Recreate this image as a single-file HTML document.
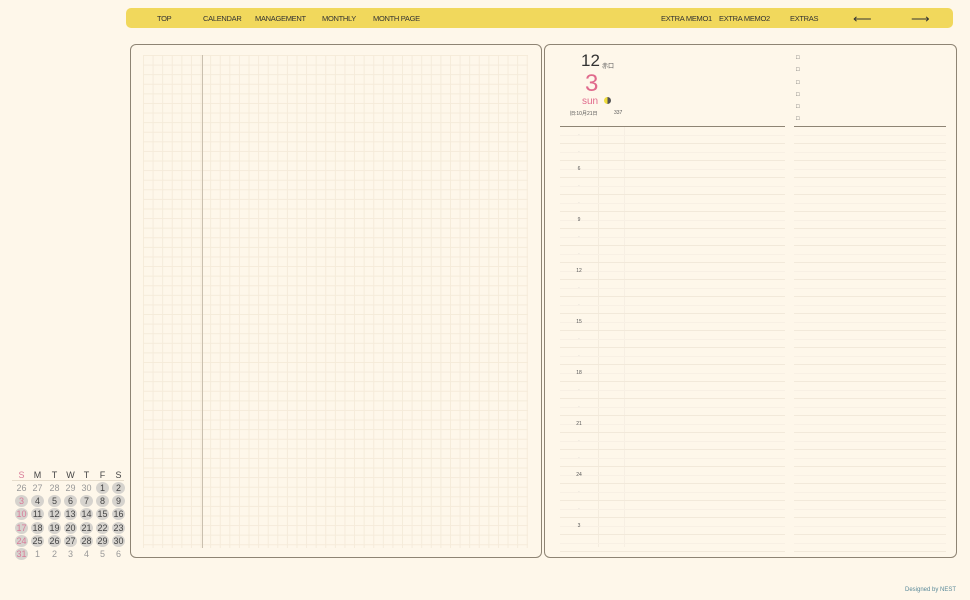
<!DOCTYPE html>
<html><head><meta charset="utf-8"><style>
body{margin:0;width:970px;height:600px;background:#fef7ea;position:relative;overflow:hidden;font-family:"Liberation Sans","Noto Sans CJK JP",sans-serif;color:#333}
.nav{position:absolute;left:126px;top:8px;width:827px;height:20px;background:#f1d85c;border-radius:5px}
.nav span{position:absolute;top:6px;font-size:7.5px;letter-spacing:-0.3px;color:#333;white-space:nowrap}
.panel{position:absolute;border:1.5px solid #8e8474;border-radius:6px;box-sizing:border-box}
.grid{position:absolute;left:143px;top:55px;width:385px;height:493px;
background-image:linear-gradient(to right,#f5ebda 1px,transparent 1px),linear-gradient(to bottom,#f5ebda 1px,transparent 1px);background-size:9.6px 9.6px}
.cal{position:absolute;left:12px;top:469px;font-size:9px;color:#444}
.cal div{position:absolute;width:13px;height:12px;text-align:center;line-height:12px}
.c{background:#d6d3ce;border-radius:50%}
.p{color:#d97b98}
.g{color:#999}
.lbl{position:absolute;left:570px;width:18px;text-align:center;font-size:5px;color:#555}
</style></head><body>
<div class="nav">
<span style="left:31px">TOP</span><span style="left:77px">CALENDAR</span><span style="left:129px">MANAGEMENT</span><span style="left:196px">MONTHLY</span><span style="left:247px">MONTH PAGE</span>
<span style="left:535px">EXTRA MEMO1</span><span style="left:593px">EXTRA MEMO2</span><span style="left:664px">EXTRAS</span>
<span style="left:727px;top:3px;font-size:13px">⟵</span><span style="left:785px;top:3px;font-size:13px">⟶</span>
</div>
<div class="panel" style="left:130px;top:44px;width:412px;height:514px"></div>
<div class="grid"></div>
<div style="position:absolute;left:202px;top:55px;width:1px;height:493px;background:#c9bfae"></div>
<div class="panel" style="left:544px;top:44px;width:413px;height:514px"></div>
<div style="position:absolute;left:581px;top:51px;font-size:17px;color:#333">12</div>
<div style="position:absolute;left:602px;top:61px;font-size:6px;color:#555">赤口</div>
<div style="position:absolute;left:585px;top:70px;font-size:24px;color:#e06a8c">3</div>
<div style="position:absolute;left:582px;top:96px;font-size:10px;color:#e06a8c">sun</div>
<div style="position:absolute;left:604px;top:97px;width:7px;height:7px;border-radius:50%;background:linear-gradient(to right,#f0dd3a 50%,#555 50%)"></div>
<div style="position:absolute;left:570px;top:110px;font-size:5px;color:#555">旧:10月21日</div>
<div style="position:absolute;left:614px;top:110px;font-size:5px;color:#555">337</div>
<div style="position:absolute;left:560px;top:126px;width:225px;height:1px;background:#8e8474"></div>
<div style="position:absolute;left:794px;top:126px;width:152px;height:1px;background:#8e8474"></div>
<div style="position:absolute;left:796px;top:52px;font-size:6px;line-height:12.3px;color:#555">□<br>□<br>□<br>□<br>□<br>□</div>
<div style="position:absolute;left:598px;top:127px;width:1px;height:420px;background:#f4ecde"></div>
<div style="position:absolute;left:624px;top:127px;width:1px;height:420px;background:#f7efe3"></div>
<div id="rows"></div>
<script>
var h='';var hrs=[4,5,6,7,8,9,10,11,12,13,14,15,16,17,18,19,20,21,22,23,24,1,2,3];
for(var i=0;i<25;i++){var y=126+i*17;
h+='<div style="position:absolute;left:560px;top:'+(y+8.5)+'px;width:225px;height:1px;background:#f8f0e4"></div>';
h+='<div style="position:absolute;left:560px;top:'+(y+17)+'px;width:225px;height:1px;background:#f2e9da"></div>';
h+='<div style="position:absolute;left:794px;top:'+(y+8.5)+'px;width:152px;height:1px;background:#f8f0e4"></div>';
h+='<div style="position:absolute;left:794px;top:'+(y+17)+'px;width:152px;height:1px;background:#f2e9da"></div>';
if(i<24){var t=hrs[i]%3==0?hrs[i]:'·';h+='<div class="lbl" style="top:'+(y+6)+'px;'+(t=='·'?'color:#bbb':'')+'">'+t+'</div>';}}
document.getElementById('rows').innerHTML=h;
var c='';var hd=['S','M','T','W','T','F','S'];var xs=[3,19,36,52,68,84,100];
for(var k=0;k<7;k++)c+='<div style="left:'+xs[k]+'px;top:0" class="'+(k==0?'p':'')+'">'+hd[k]+'</div>';
var d=[26,27,28,29,30,1,2];for(var w=0;w<6;w++){for(var k=0;k<7;k++){var n,cls;
if(w==0){n=d[k];cls=k<5?'g':'c';}else if(w==5){n=k==0?31:k;cls=k==0?'c p':'g';}else{n=(w-1)*7+3+k;cls=k==0?'c p':'c';}
c+='<div class="'+cls+'" style="left:'+xs[k]+'px;top:'+(13+w*13.2)+'px">'+n+'</div>';}}
</script>
<div class="cal" id="cal"></div>
<script>document.getElementById('cal').innerHTML=c;</script>
<div style="position:absolute;left:12px;top:480px;width:112px;height:1px;background:#e6dccb"></div>
<div style="position:absolute;left:905px;top:587px;font-size:6px;color:#5a8a9a">Designed by NEST</div>
</body></html>
